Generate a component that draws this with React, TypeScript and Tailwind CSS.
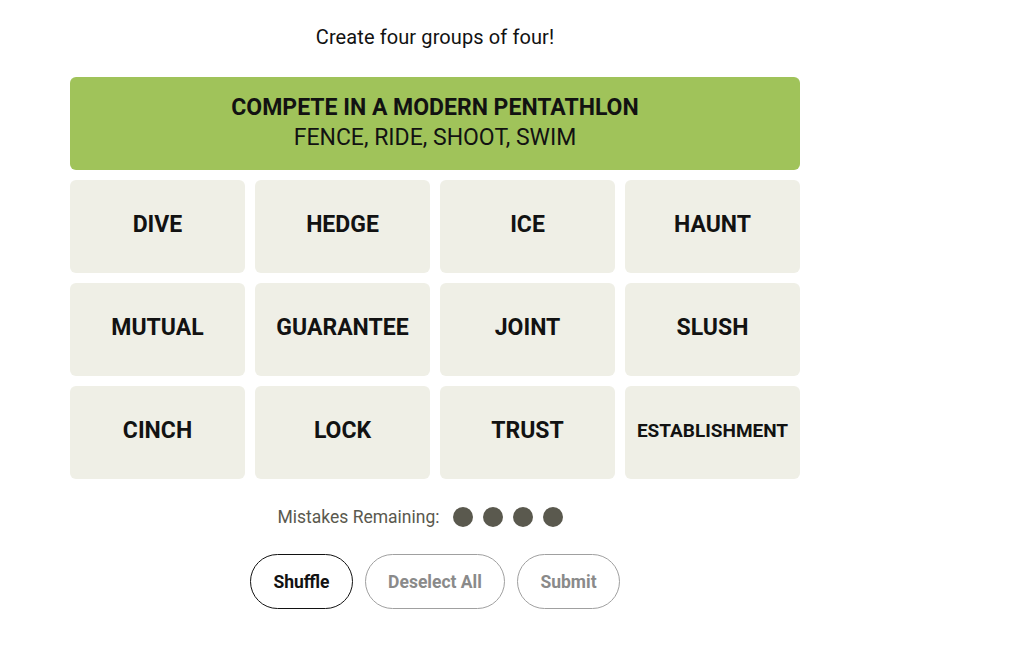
import React from "react";

const rows = [
  ["DIVE", "HEDGE", "ICE", "HAUNT"],
  ["MUTUAL", "GUARANTEE", "JOINT", "SLUSH"],
  ["CINCH", "LOCK", "TRUST", "ESTABLISHMENT"],
];

export default function App() {
  return (
    <div className="w-[1024px] h-[650px] bg-white font-['Roboto',sans-serif] text-[#121212]">
      <div className="ml-[70px] w-[730px] flex flex-col items-center">
        <div className="mt-[25px] h-[24px] text-[20px] leading-[24px] tracking-[0.1px]">Create four groups of four!</div>
        <div className="mt-[28px] w-full flex flex-col gap-[10px]">
          <div className="h-[93px] rounded-[6px] bg-[#a0c35a] flex flex-col items-center justify-center pb-[2px]">
            <div className="text-[23px] font-bold leading-[28px]">COMPETE IN A MODERN PENTATHLON</div>
            <div className="text-[23px] leading-[28px] mt-[2px]">FENCE, RIDE, SHOOT, SWIM</div>
          </div>
          {rows.map((r, i) => (
            <div key={i} className="grid grid-cols-4 gap-[10px]">
              {r.map((w) => (
                <div
                  key={w}
                  className={`h-[93px] rounded-[6px] bg-[#efefe6] flex items-center justify-center font-bold pb-[3px] ${
                    w.length > 10 ? "text-[19px]" : "text-[23px]"
                  }`}
                >
                  {w}
                </div>
              ))}
            </div>
          ))}
        </div>
        <div className="mt-[25px] mr-[30px] flex items-center gap-[13px] text-[17.5px] text-[#5a594e]">
          <span>Mistakes Remaining:</span>
          <div className="flex gap-[10px]">
            {[0, 1, 2, 3].map((d) => (
              <span key={d} className="w-[20px] h-[20px] rounded-full bg-[#5a594e]" />
            ))}
          </div>
        </div>
        <div className="mt-[24px] flex gap-[12px]">
          <button className="w-[103px] h-[55px] rounded-full border border-[#121212] text-[17.5px] font-bold text-[#121212]">
            Shuffle
          </button>
          <button className="w-[140px] h-[55px] rounded-full border border-[#a0a0a0] text-[17.5px] font-bold text-[#8a8a8a]">
            Deselect All
          </button>
          <button className="w-[103px] h-[55px] rounded-full border border-[#a0a0a0] text-[17.5px] font-bold text-[#8a8a8a]">
            Submit
          </button>
        </div>
      </div>
    </div>
  );
}
